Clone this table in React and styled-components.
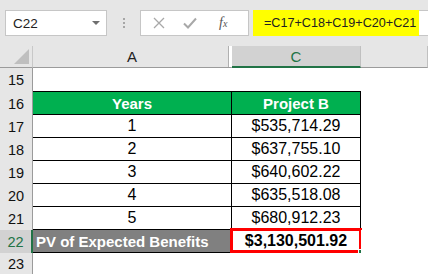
import React from "react";
import styled, { createGlobalStyle } from "styled-components";

const GlobalStyle = createGlobalStyle`
  html, body {
    margin: 0;
    padding: 0;
    background: #fff;
  }
  body {
    font-family: "Liberation Sans", Arial, sans-serif;
  }
`;

const Window = styled.div`
  width: 428px;
  height: 274px;
  overflow: hidden;
  display: flex;
  flex-direction: column;
  background: #fff;
`;

/* ---- formula bar ---- */
const FormulaBar = styled.div`
  height: 46px;
  flex: none;
  box-sizing: border-box;
  padding-top: 10px;
  background: #e6e6e6;
  display: flex;
  align-items: flex-start;
`;

const NameBox = styled.div`
  margin-left: 5px;
  width: 102px;
  height: 26px;
  box-sizing: border-box;
  background: #fff;
  border: 1px solid #c6c6c6;
  display: flex;
  align-items: center;
  justify-content: space-between;
  padding: 0 6px 0 7px;
  font-size: 13.5px;
  color: #222;
`;

const Caret = styled.span`
  width: 0;
  height: 0;
  border-left: 4px solid transparent;
  border-right: 4px solid transparent;
  border-top: 4px solid #6f6f6f;
`;

const Grip = styled.div`
  width: 33px;
  height: 26px;
  display: flex;
  flex-direction: column;
  align-items: center;
  justify-content: center;
  gap: 2px;
  span {
    width: 2px;
    height: 2px;
    background: #a6a6a6;
  }
`;

const ActionBox = styled.div`
  width: 109px;
  height: 26px;
  box-sizing: border-box;
  background: #fff;
  border: 1px solid #c6c6c6;
  display: flex;
  align-items: center;
  padding-left: 12px;
  gap: 18px;
`;

const Fx = styled.span`
  margin-left: 4px;
  font-family: "Liberation Serif", "Times New Roman", serif;
  font-style: italic;
  font-size: 14px;
  color: #555;
  small {
    font-size: 10px;
  }
`;

const FormulaBox = styled.div`
  margin-left: 4px;
  flex: 1;
  height: 26px;
  box-sizing: border-box;
  background: #fff;
  border: 1px solid #c6c6c6;
  border-right: 0;
  display: flex;
`;

const Highlight = styled.div`
  background: #ffff00;
  display: flex;
  align-items: center;
  padding: 0 3px 0 11px;
  margin: -1px 0 -1px -1px;
  font-size: 12.6px;
  color: #222;
`;

/* ---- sheet ---- */
const Sheet = styled.div`
  flex: 1;
  display: flex;
  flex-direction: column;
`;

const Row = styled.div`
  display: grid;
  grid-template-columns: 33px 199px 129px 1fr;
  height: ${(p) => p.$h}px;
  flex: none;
`;

const Corner = styled.div`
  background: #e6e6e6;
  border-right: 1px solid #c8c8c8;
  border-bottom: 1px solid #9b9b9b;
  display: flex;
  align-items: flex-end;
  justify-content: flex-end;
  padding: 0 3px 3px 0;
`;

const Triangle = styled.span`
  width: 0;
  height: 0;
  border-left: 15px solid transparent;
  border-bottom: 15px solid #bfbfbf;
`;

const ColHead = styled.div`
  position: relative;
  background: ${(p) => (p.$active ? "#d2d2d2" : "#e6e6e6")};
  color: ${(p) => (p.$active ? "#217346" : "#222")};
  border-bottom: ${(p) =>
    p.$active ? "2px solid #217346" : "1px solid #9b9b9b"};
  border-right: 1px solid #c0c0c0;
  display: flex;
  align-items: center;
  justify-content: center;
  font-size: 15px;
`;

/* double mark where column B is hidden */
const HiddenMark = styled.span`
  position: absolute;
  right: -2px;
  top: 0;
  bottom: 0;
  width: 3px;
  background: #fff;
  border-left: 1px solid #b0b0b0;
  border-right: 1px solid #b0b0b0;
`;

const RowHead = styled.div`
  background: ${(p) => (p.$active ? "#d2d2d2" : "#e6e6e6")};
  color: ${(p) => (p.$active ? "#217346" : "#111")};
  border-right: ${(p) =>
    p.$active ? "2px solid #217346" : "1px solid #9b9b9b"};
  display: flex;
  align-items: center;
  justify-content: center;
  font-size: 14.5px;
`;

const Cell = styled.div`
  position: relative;
  box-sizing: border-box;
  display: flex;
  align-items: center;
  justify-content: ${(p) => (p.$left ? "flex-start" : "center")};
  padding-left: ${(p) => (p.$left ? "3px" : "0")};
  background: ${(p) => p.$fill || "#fff"};
  color: ${(p) => p.$ink || "#000"};
  font-weight: ${(p) => (p.$bold ? 700 : 400)};
  font-size: ${(p) => p.$size || 16}px;
  white-space: nowrap;
  border-right: ${(p) => (p.$boxed ? "1px solid #000" : "0")};
  border-bottom: ${(p) => (p.$boxed || p.$under ? "1px solid #000" : "0")};
`;

const Selection = styled.span`
  position: absolute;
  left: -2px;
  right: -2px;
  top: -2px;
  bottom: -1px;
  border: 3px solid #ff0000;
  pointer-events: none;
  &::after {
    content: "";
    position: absolute;
    right: -5px;
    bottom: -5px;
    width: 4px;
    height: 4px;
    background: #217346;
    border: 1px solid #fff;
  }
`;

const benefits = [
  { n: 17, year: "1", pv: "$535,714.29" },
  { n: 18, year: "2", pv: "$637,755.10" },
  { n: 19, year: "3", pv: "$640,602.22" },
  { n: 20, year: "4", pv: "$635,518.08" },
  { n: 21, year: "5", pv: "$680,912.23" },
];

const Cross = () => (
  <svg width="12" height="12" viewBox="0 0 12 12">
    <path d="M1 1 L11 11 M11 1 L1 11" stroke="#a8a8a8" strokeWidth="1.3" fill="none" />
  </svg>
);

const Check = () => (
  <svg width="14" height="12" viewBox="0 0 14 12">
    <path d="M1 6.5 L5 10.5 L13 1.5" stroke="#a8a8a8" strokeWidth="2" fill="none" />
  </svg>
);

export default function App() {
  return (
    <Window>
      <GlobalStyle />
      <FormulaBar>
        <NameBox>
          C22
          <Caret />
        </NameBox>
        <Grip>
          <span />
          <span />
          <span />
        </Grip>
        <ActionBox>
          <Cross />
          <Check />
          <Fx>
            f<small>x</small>
          </Fx>
        </ActionBox>
        <FormulaBox>
          <Highlight>=C17+C18+C19+C20+C21</Highlight>
        </FormulaBox>
      </FormulaBar>

      <Sheet>
        <Row $h={22}>
          <Corner>
            <Triangle />
          </Corner>
          <ColHead>
            A
            <HiddenMark />
          </ColHead>
          <ColHead $active>C</ColHead>
          <ColHead />
        </Row>

        <Row $h={24}>
          <RowHead>15</RowHead>
          <Cell $under />
          <Cell $under />
          <Cell />
        </Row>

        <Row $h={23}>
          <RowHead>16</RowHead>
          <Cell $boxed $fill="#00b050" $ink="#fff" $bold $size={15}>
            Years
          </Cell>
          <Cell $boxed $fill="#00b050" $ink="#fff" $bold $size={15}>
            Project B
          </Cell>
          <Cell />
        </Row>

        {benefits.map((r) => (
          <Row $h={23} key={r.n}>
            <RowHead>{r.n}</RowHead>
            <Cell $boxed>{r.year}</Cell>
            <Cell $boxed>{r.pv}</Cell>
            <Cell />
          </Row>
        ))}

        <Row $h={23}>
          <RowHead $active>22</RowHead>
          <Cell $boxed $left $fill="#808080" $ink="#fff" $bold $size={15}>
            PV of Expected Benefits
          </Cell>
          <Cell $boxed $bold>
            $3,130,501.92
            <Selection />
          </Cell>
          <Cell />
        </Row>

        <Row $h={22}>
          <RowHead>23</RowHead>
          <Cell />
          <Cell />
          <Cell />
        </Row>
      </Sheet>
    </Window>
  );
}
